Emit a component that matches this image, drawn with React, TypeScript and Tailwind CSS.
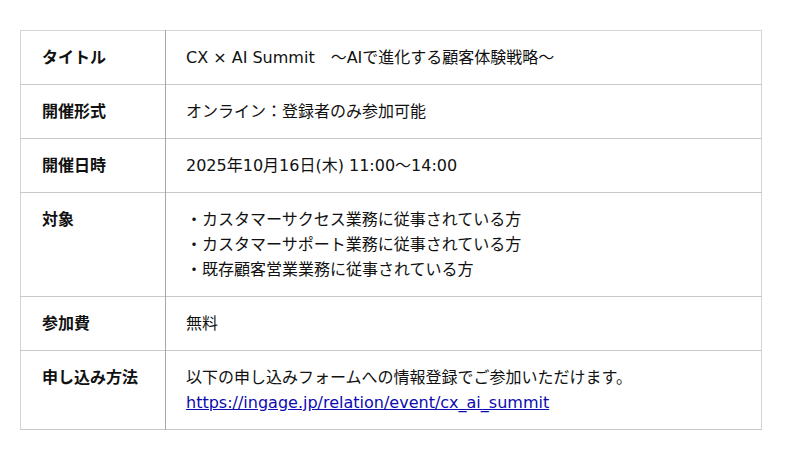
const rows: { label: string; lines: React.ReactNode[] }[] = [
  { label: "タイトル", lines: ["CX × AI Summit　～AIで進化する顧客体験戦略～"] },
  { label: "開催形式", lines: ["オンライン：登録者のみ参加可能"] },
  { label: "開催日時", lines: ["2025年10月16日(木) 11:00～14:00"] },
  {
    label: "対象",
    lines: [
      "・カスタマーサクセス業務に従事されている方",
      "・カスタマーサポート業務に従事されている方",
      "・既存顧客営業業務に従事されている方",
    ],
  },
  { label: "参加費", lines: ["無料"] },
  {
    label: "申し込み方法",
    lines: [
      "以下の申し込みフォームへの情報登録でご参加いただけます。",
      <a key="url" href="#" className="text-[#0b0bb0] underline">
        https://ingage.jp/relation/event/cx_ai_summit
      </a>,
    ],
  },
];

export default function App() {
  return (
    <div
      className="min-h-[460px] w-[800px] bg-white pt-[30px] pl-5 text-[16px] leading-[25px] text-[#111]"
      style={{ fontFamily: '"DejaVu Sans", "Noto Sans CJK JP", sans-serif' }}
    >
      <table className="w-[742px] border-collapse border border-[#d4d4d4]">
        <tbody>
          {rows.map((row) => (
            <tr key={row.label} className="border-b border-[#c8c8c8]">
              <th className="w-[145px] border-r border-[#a8a8a8] py-[14px] pl-[21px] text-left align-top font-bold">
                {row.label}
              </th>
              <td className="py-[14px] pl-[20px] align-top">
                {row.lines.map((line, i) => (
                  <div key={i}>{line}</div>
                ))}
              </td>
            </tr>
          ))}
        </tbody>
      </table>
    </div>
  );
}
